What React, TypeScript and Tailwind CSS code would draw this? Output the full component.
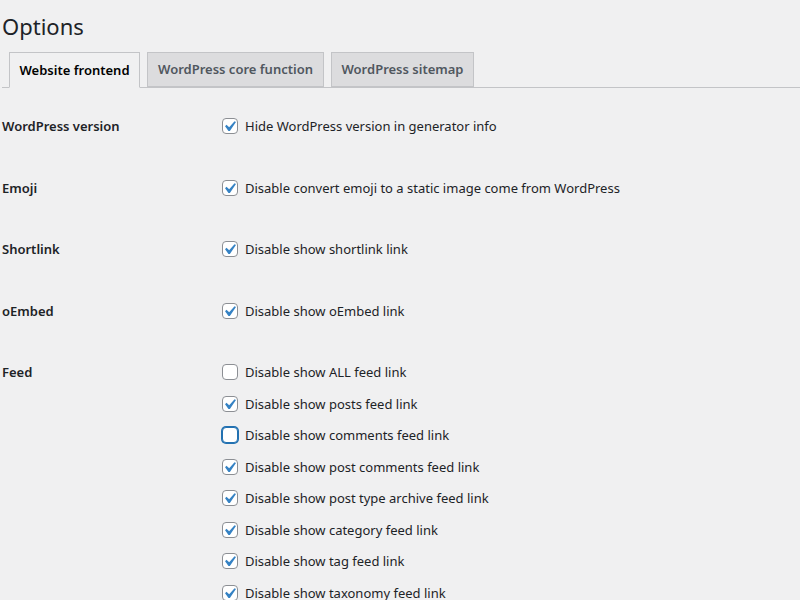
import React from 'react'

type Option = { text: string; checked?: boolean; focused?: boolean }
type Row = { label: string; options: Option[] }

const rows: Row[] = [
  { label: 'WordPress version', options: [{ text: 'Hide WordPress version in generator info', checked: true }] },
  { label: 'Emoji', options: [{ text: 'Disable convert emoji to a static image come from WordPress', checked: true }] },
  { label: 'Shortlink', options: [{ text: 'Disable show shortlink link', checked: true }] },
  { label: 'oEmbed', options: [{ text: 'Disable show oEmbed link', checked: true }] },
  {
    label: 'Feed',
    options: [
      { text: 'Disable show ALL feed link' },
      { text: 'Disable show posts feed link', checked: true },
      { text: 'Disable show comments feed link', focused: true },
      { text: 'Disable show post comments feed link', checked: true },
      { text: 'Disable show post type archive feed link', checked: true },
      { text: 'Disable show category feed link', checked: true },
      { text: 'Disable show tag feed link', checked: true },
      { text: 'Disable show taxonomy feed link', checked: true },
    ],
  },
]

const Checkbox = ({ checked, focused }: { checked?: boolean; focused?: boolean }) => {
  return (
    <span
      className={
        focused
          ? 'relative w-4 h-4 shrink-0 rounded-[4px] bg-white border border-[#2271b1] shadow-[0_0_0_1px_#2271b1]'
          : 'relative w-4 h-4 shrink-0 rounded-[4px] bg-white border border-[#8c8f94]'
      }
    >
      {checked && (
        <svg viewBox="0 0 20 20" className="absolute -left-[4px] -top-[3px] w-[21px] h-[21px]">
          <path d="M14.83 4.89l1.34.94-5.81 8.38H9.02L5.78 9.67l1.34-1.25 2.57 2.4z" fill="#3582c4" />
        </svg>
      )}
    </span>
  )
}

const App = () => {
  const tabs = [
    { name: 'Website frontend', width: 'w-[131px]', active: true },
    { name: 'WordPress core function', width: 'w-[177px]' },
    { name: 'WordPress sitemap', width: 'w-[143px]' },
  ]

  return (
    <div className="h-screen bg-[#f0f0f1] text-[#1d2327] text-[13px] font-['Noto_Sans',sans-serif] overflow-hidden">
      <div className="pl-[2px]">
        <h1 className="mt-[11px] text-[22px] leading-[30px] font-normal">Options</h1>

        <div className="mt-[11px] flex border-b border-[#c3c4c7] h-[36px]">
          {tabs.map((tab) => (
            <div
              key={tab.name}
              className={
                tab.active
                  ? `${tab.width} ml-[7px] h-[36px] pt-[1px] flex items-center justify-center border border-[#c3c4c7] border-b-[#f0f0f1] bg-[#f0f0f1] text-[#000] font-semibold`
                  : `${tab.width} ml-[7px] h-[35px] pt-[1px] flex items-center justify-center border border-[#c3c4c7] bg-[#dcdcde] text-[#50575e] font-semibold`
              }
            >
              {tab.name}
            </div>
          ))}
        </div>

        <div className="mt-[7.5px]">
          {rows.map((row) => (
            <div key={row.label} className="flex py-[21.75px]">
              <div className="w-[220px] shrink-0 font-semibold leading-[18px]">{row.label}</div>
              <div className="flex flex-col gap-[13.5px]">
                {row.options.map((opt) => (
                  <label key={opt.text} className="flex items-center gap-[7px] h-[18px] leading-[18px]">
                    <Checkbox checked={opt.checked} focused={opt.focused} />
                    <span>{opt.text}</span>
                  </label>
                ))}
              </div>
            </div>
          ))}
        </div>
      </div>
    </div>
  )
}

export default App
